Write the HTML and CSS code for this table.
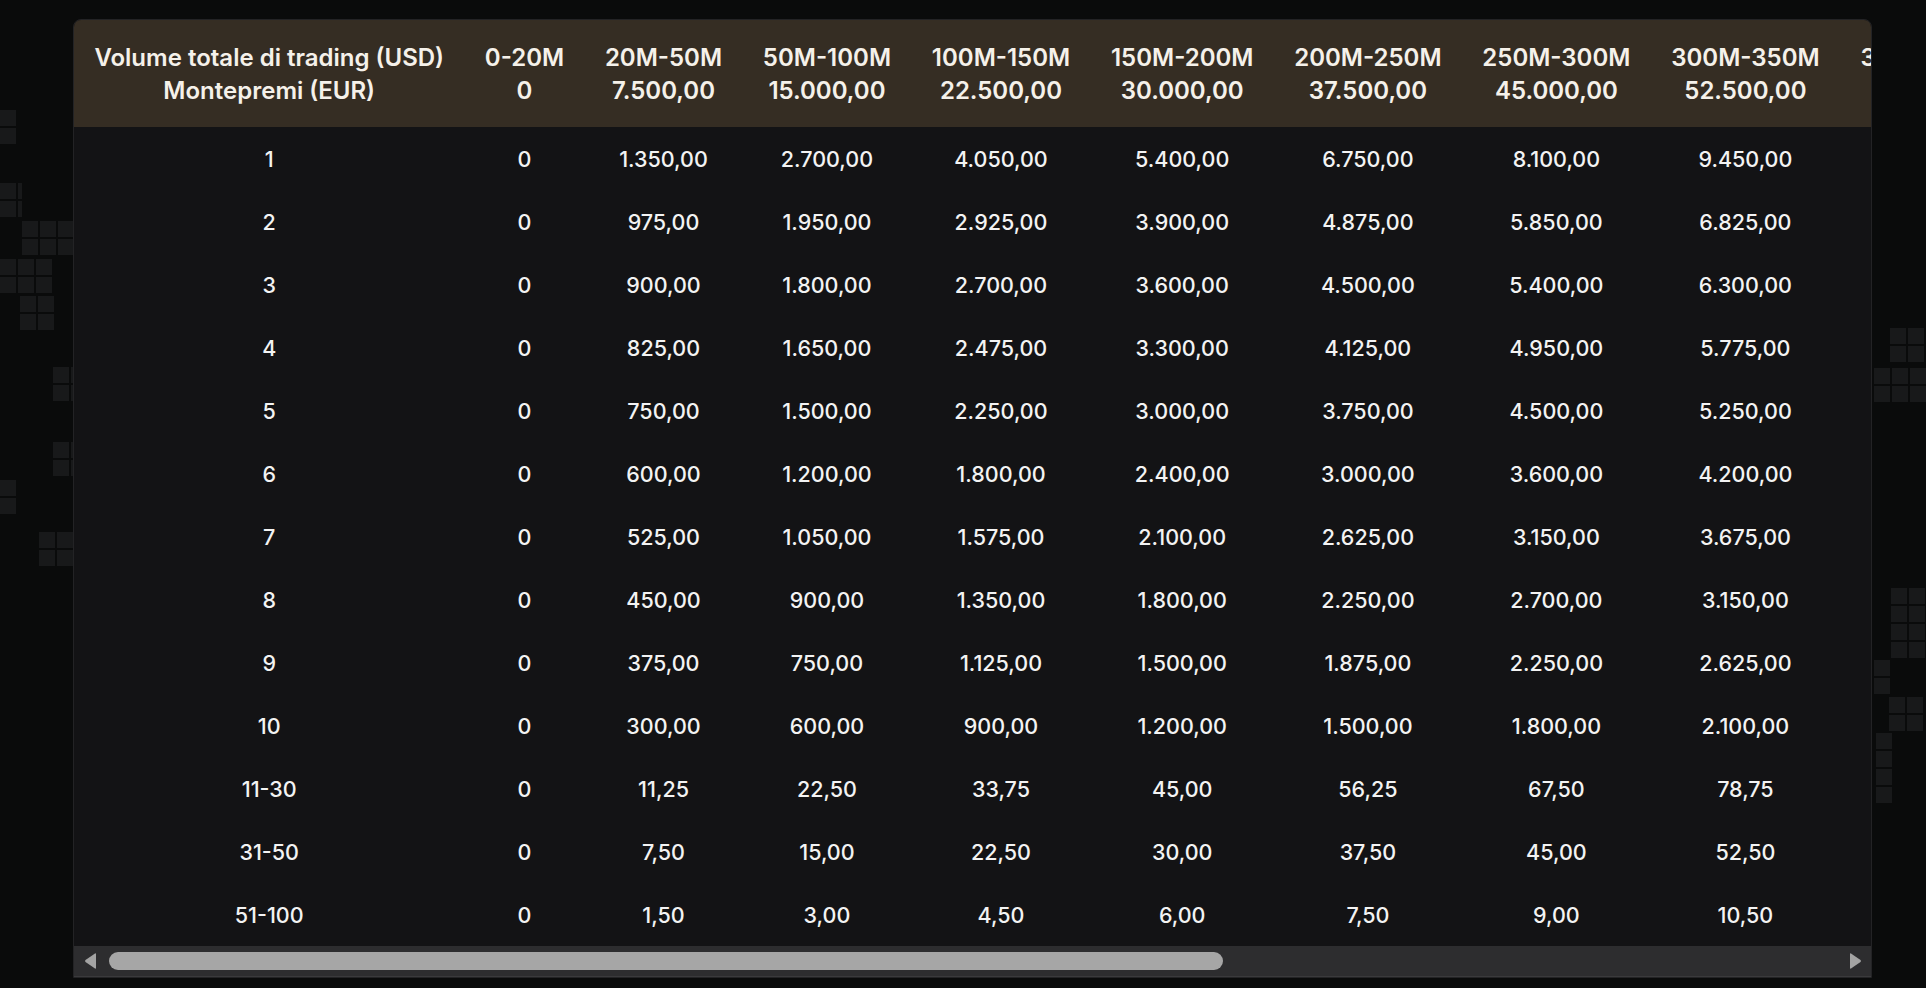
FILE: index.html
```html
<!DOCTYPE html>
<html lang="it">
<head>
<meta charset="utf-8">
<title>Montepremi</title>
<link rel="stylesheet" href="styles.css">
</head>
<body>
<div class="deco" aria-hidden="true">
  <span class="blk b1"></span><span class="blk b2"></span><span class="blk b3"></span>
  <span class="blk b4"></span><span class="blk b5"></span><span class="blk b6"></span>
  <span class="blk b7"></span><span class="blk b8"></span><span class="blk b9"></span>
  <span class="blk r1"></span><span class="blk r2"></span><span class="blk r3"></span>
  <span class="blk r4"></span><span class="blk r5"></span><span class="blk r6"></span>
</div>
<main class="page">
  <section class="table-card">
    <div class="table-scroll">
      <table class="prize-table">
        <thead>
          <tr>
            <th>Volume totale di trading (USD)<br>Montepremi (EUR)</th>
            <th>0-20M<br>0</th>
            <th>20M-50M<br>7.500,00</th>
            <th>50M-100M<br>15.000,00</th>
            <th>100M-150M<br>22.500,00</th>
            <th>150M-200M<br>30.000,00</th>
            <th>200M-250M<br>37.500,00</th>
            <th>250M-300M<br>45.000,00</th>
            <th>300M-350M<br>52.500,00</th>
            <th>350M-400M<br>60.000,00</th>
            <th>400M-450M<br>67.500,00</th>
            <th>450M-500M<br>75.000,00</th>
          </tr>
        </thead>
        <tbody>
          <tr><td>1</td><td>0</td><td>1.350,00</td><td>2.700,00</td><td>4.050,00</td><td>5.400,00</td><td>6.750,00</td><td>8.100,00</td><td>9.450,00</td><td>10.800,00</td><td>12.150,00</td><td>13.500,00</td></tr>
          <tr><td>2</td><td>0</td><td>975,00</td><td>1.950,00</td><td>2.925,00</td><td>3.900,00</td><td>4.875,00</td><td>5.850,00</td><td>6.825,00</td><td>7.800,00</td><td>8.775,00</td><td>9.750,00</td></tr>
          <tr><td>3</td><td>0</td><td>900,00</td><td>1.800,00</td><td>2.700,00</td><td>3.600,00</td><td>4.500,00</td><td>5.400,00</td><td>6.300,00</td><td>7.200,00</td><td>8.100,00</td><td>9.000,00</td></tr>
          <tr><td>4</td><td>0</td><td>825,00</td><td>1.650,00</td><td>2.475,00</td><td>3.300,00</td><td>4.125,00</td><td>4.950,00</td><td>5.775,00</td><td>6.600,00</td><td>7.425,00</td><td>8.250,00</td></tr>
          <tr><td>5</td><td>0</td><td>750,00</td><td>1.500,00</td><td>2.250,00</td><td>3.000,00</td><td>3.750,00</td><td>4.500,00</td><td>5.250,00</td><td>6.000,00</td><td>6.750,00</td><td>7.500,00</td></tr>
          <tr><td>6</td><td>0</td><td>600,00</td><td>1.200,00</td><td>1.800,00</td><td>2.400,00</td><td>3.000,00</td><td>3.600,00</td><td>4.200,00</td><td>4.800,00</td><td>5.400,00</td><td>6.000,00</td></tr>
          <tr><td>7</td><td>0</td><td>525,00</td><td>1.050,00</td><td>1.575,00</td><td>2.100,00</td><td>2.625,00</td><td>3.150,00</td><td>3.675,00</td><td>4.200,00</td><td>4.725,00</td><td>5.250,00</td></tr>
          <tr><td>8</td><td>0</td><td>450,00</td><td>900,00</td><td>1.350,00</td><td>1.800,00</td><td>2.250,00</td><td>2.700,00</td><td>3.150,00</td><td>3.600,00</td><td>4.050,00</td><td>4.500,00</td></tr>
          <tr><td>9</td><td>0</td><td>375,00</td><td>750,00</td><td>1.125,00</td><td>1.500,00</td><td>1.875,00</td><td>2.250,00</td><td>2.625,00</td><td>3.000,00</td><td>3.375,00</td><td>3.750,00</td></tr>
          <tr><td>10</td><td>0</td><td>300,00</td><td>600,00</td><td>900,00</td><td>1.200,00</td><td>1.500,00</td><td>1.800,00</td><td>2.100,00</td><td>2.400,00</td><td>2.700,00</td><td>3.000,00</td></tr>
          <tr><td>11-30</td><td>0</td><td>11,25</td><td>22,50</td><td>33,75</td><td>45,00</td><td>56,25</td><td>67,50</td><td>78,75</td><td>90,00</td><td>101,25</td><td>112,50</td></tr>
          <tr><td>31-50</td><td>0</td><td>7,50</td><td>15,00</td><td>22,50</td><td>30,00</td><td>37,50</td><td>45,00</td><td>52,50</td><td>60,00</td><td>67,50</td><td>75,00</td></tr>
          <tr><td>51-100</td><td>0</td><td>1,50</td><td>3,00</td><td>4,50</td><td>6,00</td><td>7,50</td><td>9,00</td><td>10,50</td><td>12,00</td><td>13,50</td><td>15,00</td></tr>
        </tbody>
      </table>
    </div>
    <div class="hscroll">
      <svg class="hs-arrow" width="14" height="20" viewBox="0 0 14 20"><path d="M12 2.5 L2.5 9 Q1.5 10 2.5 11 L12 17.5 Q13 18 13 17 L13 3 Q13 2 12 2.5Z" fill="#a3a3a3"/></svg>
      <div class="hs-track"><div class="hs-thumb"></div></div>
      <svg class="hs-arrow" width="14" height="20" viewBox="0 0 14 20"><path d="M2 2.5 L11.5 9 Q12.5 10 11.5 11 L2 17.5 Q1 18 1 17 L1 3 Q1 2 2 2.5Z" fill="#a3a3a3"/></svg>
    </div>
  </section>
</main>
</body>
</html>
```
FILE: styles.css
```css
* { box-sizing: border-box; }
html, body {
  margin: 0;
  padding: 0;
  background: #0a0b0b;
  height: 100%;
  overflow: hidden;
}
body {
  font-family: Inter, "Noto Sans", "Liberation Sans", sans-serif;
  color: #f4f4f4;
  position: relative;
}
.deco {
  position: absolute;
  inset: 0;
  pointer-events: none;
  z-index: 0;
}
.blk {
  position: absolute;
  display: block;
  background:
    linear-gradient(to right, transparent 16px, #0a0b0b 16px) 0 0 / 18px 18px,
    linear-gradient(to bottom, transparent 16px, #0a0b0b 16px) 0 0 / 18px 18px,
    #18191a;
}
.b1 { left: 0; top: 110px; width: 16px; height: 34px; }
.b2 { left: 0; top: 183px; width: 22px; height: 34px; }
.b3 { left: 22px; top: 221px; width: 52px; height: 34px; }
.b4 { left: 0; top: 259px; width: 54px; height: 34px; }
.b5 { left: 20px; top: 296px; width: 34px; height: 34px; }
.b6 { left: 53px; top: 367px; width: 20px; height: 34px; }
.b7 { left: 53px; top: 442px; width: 20px; height: 34px; }
.b8 { left: 0; top: 480px; width: 18px; height: 34px; }
.b9 { left: 39px; top: 532px; width: 34px; height: 34px; }
.r1 { left: 1890px; top: 328px; width: 36px; height: 34px; }
.r2 { left: 1874px; top: 368px; width: 52px; height: 34px; }
.r3 { left: 1891px; top: 588px; width: 36px; height: 70px; }
.r4 { left: 1874px; top: 660px; width: 16px; height: 34px; }
.r5 { left: 1889px; top: 697px; width: 36px; height: 34px; }
.r6 { left: 1876px; top: 733px; width: 16px; height: 70px; }

.page {
  position: relative;
  z-index: 1;
  padding: 19px 54px 0 73px;
}
.table-card {
  width: 1799px;
  background: #131315;
  border: 1px solid #232325;
  border-radius: 8px 8px 0 0;
  overflow: hidden;
}
.table-scroll {
  overflow: hidden;
}
.prize-table {
  border-collapse: collapse;
  white-space: nowrap;
  text-align: center;
}
.prize-table thead tr {
  background: #352d23;
}
.prize-table th {
  font-size: 24px;
  font-weight: 600;
  line-height: 33px;
  padding: 21px 20.4px 20px;
  color: #f5f1ea;
}
.prize-table td {
  font-size: 21.5px;
  font-weight: 500;
  line-height: 27px;
  height: 63px;
  padding: 19px 20.4px 17px;
  color: #f3f3f3;
}
.hscroll {
  display: flex;
  align-items: center;
  height: 31px;
  background: #2d2d2f;
  border-bottom: 1px solid #3a3a3c;
  padding: 0 8px 0 9px;
  gap: 12px;
}
.hs-arrow {
  flex: none;
}
.hs-track {
  flex: 1;
  height: 18px;
}
.hs-thumb {
  width: 1114px;
  height: 18px;
  border-radius: 9px;
  background: #a6a6a6;
}
```
